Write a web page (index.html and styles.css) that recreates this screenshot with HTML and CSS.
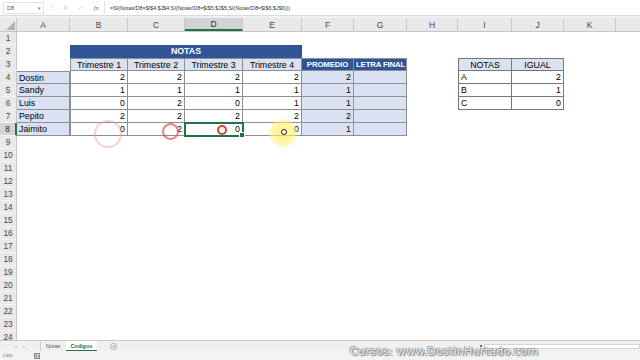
FILE: index.html
```html
<!DOCTYPE html>
<html lang="es">
<head>
<meta charset="utf-8">
<title>Codigos</title>
<link rel="stylesheet" href="styles.css">
</head>
<body>
<div class="app">
  <div class="fbar">
    <div class="namebox"><span>D8</span><span class="dd">▾</span></div>
    <div class="dots">⋮</div>
    <div class="ficons"><span>✕</span><span>✓</span><span class="fx"><i>f</i>x</span></div>
    <div class="formula">=SI(Notas!D8=$I$4;$J$4;SI(Notas!D8=$I$5;$J$5;SI(Notas!D8=$I$6;$J$6)))</div>
  </div>
  <div class="gap"></div>
  <div class="colhdr">
    <div class="corner"><svg width="10" height="10" viewBox="0 0 10 10"><path d="M10 1 L10 10 L1 10 Z" fill="#b4b4b4"/></svg></div>
    <div>A</div><div>B</div><div>C</div><div class="csel">D</div><div>E</div><div>F</div><div>G</div><div>H</div><div>I</div><div>J</div><div>K</div><div class="last"></div>
  </div>
  <div class="sheet">
    <div class="r"><div class="rh">1</div></div>
    <div class="r"><div class="rh">2</div><div></div><div class="span4 dk">NOTAS</div></div>
    <div class="r"><div class="rh">3</div><div></div>
      <div class="lb b bt bl c">Trimestre 1</div><div class="lb b bt c">Trimestre 2</div><div class="lb b bt c">Trimestre 3</div><div class="lb b bt c">Trimestre 4</div>
      <div class="dk b bt c hb">PROMEDIO</div><div class="dk b bt c hb">LETRA FINAL</div><div></div>
      <div class="lb b2 bt2 bl2 c">NOTAS</div><div class="lb b2 bt2 c">IGUAL</div>
    </div>
    <div class="r"><div class="rh">4</div>
      <div class="lb b bt">Dostin</div><div class="b n bl">2</div><div class="b n">2</div><div class="b n">2</div><div class="b n">2</div><div class="lb b n">2</div><div class="lb b"></div><div></div>
      <div class="b2 bl2">A</div><div class="b2 n">2</div>
    </div>
    <div class="r"><div class="rh">5</div>
      <div class="lb b">Sandy</div><div class="b n bl">1</div><div class="b n">1</div><div class="b n">1</div><div class="b n">1</div><div class="lb b n">1</div><div class="lb b"></div><div></div>
      <div class="b2 bl2">B</div><div class="b2 n">1</div>
    </div>
    <div class="r"><div class="rh">6</div>
      <div class="lb b">Luis</div><div class="b n bl">0</div><div class="b n">2</div><div class="b n">0</div><div class="b n">1</div><div class="lb b n">1</div><div class="lb b"></div><div></div>
      <div class="b2 bl2">C</div><div class="b2 n">0</div>
    </div>
    <div class="r"><div class="rh">7</div>
      <div class="lb b">Pepito</div><div class="b n bl">2</div><div class="b n">2</div><div class="b n">2</div><div class="b n">2</div><div class="lb b n">2</div><div class="lb b"></div>
    </div>
    <div class="r"><div class="rh rsel">8</div>
      <div class="lb b">Jaimito</div><div class="b n bl">0</div><div class="b n">2</div><div class="b n sel">0</div><div class="b n">0</div><div class="lb b n">1</div><div class="lb b"></div>
    </div>
    <div class="r"><div class="rh">9</div></div>
    <div class="r"><div class="rh">10</div></div>
    <div class="r"><div class="rh">11</div></div>
    <div class="r"><div class="rh">12</div></div>
    <div class="r"><div class="rh">13</div></div>
    <div class="r"><div class="rh">14</div></div>
    <div class="r"><div class="rh">15</div></div>
    <div class="r"><div class="rh">16</div></div>
    <div class="r"><div class="rh">17</div></div>
    <div class="r"><div class="rh">18</div></div>
    <div class="r"><div class="rh">19</div></div>
    <div class="r"><div class="rh">20</div></div>
    <div class="r"><div class="rh">21</div></div>
    <div class="r"><div class="rh">22</div></div>
    <div class="r"><div class="rh">23</div></div>
    <div class="r"><div class="rh">24</div></div>

    <div class="ring ring1"></div>
    <div class="ring ring2"></div>
    <div class="ring ring3"></div>
    <div class="glow"></div>
    <div class="cursor"></div>
  </div>
  <div class="tabs">
    <div class="nav"><span>◂</span><span>▸</span></div>
    <div class="tab">Notas</div>
    <div class="tab active">Codigos</div>
    <div class="plus">+</div>
    <div class="spacer"></div>
    <div class="hscroll"><span class="split"></span><span class="track"></span></div>
  </div>
  <div class="status">
    <span class="ready">Listo</span>
    <svg class="sicon" width="6" height="6" viewBox="0 0 6 6"><rect x="0.5" y="0.5" width="5" height="5" fill="none" stroke="#888" stroke-width="1"/><path d="M0.5 2.5H5.5M0.5 4H5.5M2.5 0.5V5.5" stroke="#888" stroke-width="0.7"/></svg>
  </div>
  <div class="watermark">Cursos: www.DostinHurtado.com</div>
</div>
</body>
</html>
```

FILE: styles.css
```css
* { box-sizing: border-box; }
html, body { margin: 0; padding: 0; }
body {
  width: 640px;
  height: 360px;
  overflow: hidden;
  background: #fff;
  font-family: "Liberation Sans", Arial, sans-serif;
  color: #000;
}
.app {
  position: relative;
  width: 640px;
  height: 360px;
  display: flex;
  flex-direction: column;
}

/* formula bar */
.fbar {
  height: 16px;
  display: flex;
  align-items: center;
  background: #fff;
  border-bottom: 1px solid #dadada;
  padding-left: 3px;
}
.namebox {
  width: 41px;
  height: 12px;
  border: 1px solid #e2e2e2;
  display: flex;
  align-items: center;
  justify-content: space-between;
  padding: 0 2px 0 3px;
  font-size: 5.5px;
  color: #555;
}
.namebox .dd { font-size: 5px; color: #777; }
.dots { width: 14px; text-align: center; font-size: 7px; color: #bbb; }
.ficons {
  width: 46px;
  display: flex;
  justify-content: space-around;
  font-size: 6px;
  color: #c4c4c4;
}
.ficons .fx { color: #777; font-family: "Liberation Serif", serif; font-size: 6.5px; }
.formula {
  flex: 1;
  height: 13px;
  border-left: 1px solid #e2e2e2;
  padding-left: 5px;
  display: flex;
  align-items: center;
  font-size: 5.4px;
  color: #333;
  white-space: nowrap;
}
.gap { height: 2px; background: #f0f0f0; }

/* column headers */
.colhdr {
  height: 14px;
  display: grid;
  grid-template-columns: 17px 53px 58px 57px 58px 59px 52px 53px 51px 54px 52px 52px 1fr;
  background: #e9e9e9;
  border-bottom: 1px solid #c6c6c6;
}
.colhdr > div {
  border-right: 1px solid #c9c9c9;
  display: flex;
  align-items: center;
  justify-content: center;
  font-size: 8.5px;
  color: #444;
}
.colhdr .corner { align-items: flex-end; justify-content: flex-end; padding: 0 1px 1px 0; }
.colhdr .csel {
  background: #d3d3d3;
  border-bottom: 2px solid #217346;
  color: #262626;
}
.colhdr .last { border-right: none; }

/* sheet */
.sheet {
  position: relative;
  flex: 1;
  overflow: hidden;
}
.r {
  height: 13px;
  display: grid;
  grid-template-columns: 17px 53px 58px 57px 58px 59px 52px 53px 51px 54px 52px 52px 1fr;
  font-size: 8.8px;
  line-height: 12px;
}
.r > div { white-space: nowrap; overflow: hidden; padding: 0 2px; }
.r .rh {
  background: #e9e9e9;
  border-right: 1px solid #c6c6c6;
  border-bottom: 1px solid #f4f4f4;
  text-align: center;
  color: #444;
  font-size: 8.3px;
  padding: 0;
}
.r .rsel {
  background: #d3d3d3;
  border-right: 2px solid #217346;
  color: #262626;
}
.span4 { grid-column: span 4; }
.dk { background: #2f5597; color: #fff; font-weight: bold; text-align: center; }
.hb { font-size: 7.8px; letter-spacing: -0.15px; }
.lb { background: #d9e1f2; }
.c { text-align: center; }
.n { text-align: right; }
.b { border-right: 1px solid #8f8f8f; border-bottom: 1px solid #8f8f8f; }
.bt { border-top: 1px solid #8f8f8f; }
.bl { border-left: 1px solid #8f8f8f; }
.b2 { border-right: 1px solid #777; border-bottom: 1px solid #777; }
.bt2 { border-top: 1px solid #777; }
.bl2 { border-left: 1px solid #777; }
.r .sel {
  position: relative;
  overflow: visible;
  outline: 2px solid #217346;
  outline-offset: -1px;
}
.r .sel::after {
  content: "";
  position: absolute;
  right: -3px;
  bottom: -3px;
  width: 4px;
  height: 4px;
  background: #217346;
  border: 1px solid #fff;
}

/* click overlays */
.ring { position: absolute; border-radius: 50%; }
.ring1 {
  left: 94px; top: 88px; width: 28px; height: 28px;
  border: 2px solid rgba(240, 150, 150, 0.45);
}
.ring2 {
  left: 162px; top: 91px; width: 17px; height: 17px;
  border: 2.5px solid rgba(228, 80, 80, 0.72);
}
.ring3 {
  left: 217px; top: 93px; width: 10px; height: 10px;
  border: 2.5px solid #e53935;
}
.glow {
  position: absolute;
  left: 269px; top: 87px; width: 28px; height: 28px;
  border-radius: 50%;
  background: radial-gradient(circle, rgba(255, 238, 90, 0.75) 0%, rgba(255, 240, 110, 0.55) 55%, rgba(255, 245, 150, 0) 100%);
}
.cursor {
  position: absolute;
  left: 281px; top: 97px; width: 6px; height: 6px;
  border-radius: 50%;
  border: 1.3px solid #222;
  background: #fff;
}

/* tabs */
.tabs {
  height: 11px;
  display: flex;
  align-items: stretch;
  background: #f0f0f0;
  border-top: 1px solid #c8c8c8;
  font-size: 5.5px;
  color: #555;
}
.nav {
  width: 41px;
  display: flex;
  justify-content: center;
  gap: 6px;
  align-items: center;
  color: #c8c8c8;
  font-size: 5px;
  border-right: 1px solid #cfcfcf;
}
.tab { padding: 0 5px; display: flex; align-items: center; }
.tab.active {
  margin-left: 1px;
  background: #fff;
  color: #217346;
  font-weight: bold;
  padding: 0 5px 0 4px;
  border-bottom: 1.5px solid #217346;
  min-width: 30px;
}
.plus {
  margin-left: 13px;
  width: 7px;
  height: 7px;
  align-self: center;
  border: 1px solid #aaa;
  border-radius: 50%;
  font-size: 6px;
  line-height: 5px;
  text-align: center;
  color: #888;
}
.spacer { flex: 1; }
.hscroll { width: 160px; display: flex; align-items: center; }
.hscroll .split { width: 2px; height: 2px; background: #666; margin-right: 2px; }
.hscroll .track { flex: 1; height: 5px; background: #fff; border: 1px solid #d6d6d6; }

/* status */
.status {
  flex: 0 0 9px;
  height: 9px;
  background: #f3f3f3;
  display: flex;
  align-items: center;
  padding-left: 3px;
  font-size: 4.5px;
  color: #777;
}
.sicon { margin-left: 21px; }

.watermark {
  position: absolute;
  left: 350px;
  top: 345px;
  font-family: "DejaVu Sans", sans-serif;
  font-size: 11.3px;
  letter-spacing: 0.1px;
  color: #f2f2f2;
  text-shadow: 0 0 1px #666, 1px 1px 1px #777, -1px -1px 1px #999;
  white-space: nowrap;
}
```
